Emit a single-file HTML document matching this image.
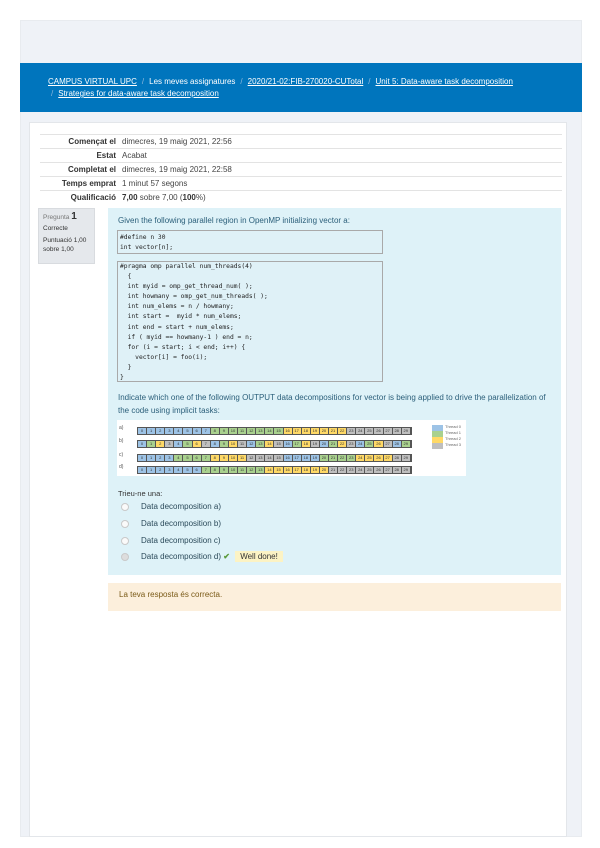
<!DOCTYPE html>
<html><head><meta charset="utf-8"><style>
*{margin:0;padding:0;box-sizing:border-box}
body{width:600px;height:848px;background:#fff;font-family:"Liberation Sans",sans-serif;position:relative;overflow:hidden;color:#333}
.abs{position:absolute}
#band{left:20px;top:20px;width:562px;height:817px;background:#eff2f7;border:1px solid #e8ebef}
#hdr{left:20px;top:63px;width:562px;height:49px;background:#0075bd}
#hdr div{position:absolute;font-size:8px;color:#fff;white-space:nowrap}
#hdr u{color:#fff}
#hdr .s{color:#8fb9dc;margin:0 5px}
#card{left:29px;top:122px;width:538px;height:715px;background:#fff;border:1px solid #e3e6ea}
.row{position:absolute;left:40px;width:522px;height:14px;border-top:1px solid #e3e3e3;font-size:8px;line-height:13px}
.row b{position:absolute;right:446px;font-weight:bold;color:#333}
.row span{position:absolute;left:82px;color:#444}
#info{left:38px;top:208px;width:57px;height:56px;background:#e5e8ec;border:1px solid #d8dbdf;font-size:6.5px;color:#333;padding:3px 4px;line-height:9px}
#q{left:108px;top:208px;width:453px;height:367px;background:#def2f8}
.code{position:absolute;left:117px;width:266px;background:#dff1f7;border:1px solid #a9a9a9;font-family:"DejaVu Sans Mono","Liberation Mono",monospace;font-size:6.3px;color:#222;padding:0 2px;white-space:pre}
.t{position:absolute;font-size:8px;color:#2b5f7a;white-space:nowrap}
.opt{position:absolute;left:121px;font-size:8px;color:#2b4a5a;white-space:nowrap}
.opt i{position:absolute;left:0;top:1px;width:8px;height:8px;border:1px solid #c9c9c9;border-radius:50%;background:#fafafa}
.opt span{position:absolute;left:20px}
#fb{left:108px;top:583px;width:453px;height:28px;background:#fcefdc;font-size:8px;color:#7a5a17;padding:7px 11px}
.strip{position:absolute;left:137px;height:8px;display:flex;border:1px solid #555}
.strip div{width:9.1px;height:6px;border-right:1px solid #555;font-size:4px;line-height:6px;text-align:center;color:#333}
</style></head><body>
<div id="band" class="abs"></div>
<div id="hdr" class="abs">
<div style="left:28px;top:14px"><u>CAMPUS VIRTUAL UPC</u><span class="s">/</span>Les meves assignatures<span class="s">/</span><u>2020/21-02:FIB-270020-CUTotal</u><span class="s">/</span><u>Unit 5: Data-aware task decomposition</u></div>
<div style="left:31px;top:26px"><span class="s" style="margin-left:0">/</span><u>Strategies for data-aware task decomposition</u></div>
</div>
<div id="card" class="abs"></div>
<div class="row" style="top:134px"><b>Començat el</b><span>dimecres, 19 maig 2021, 22:56</span></div>
<div class="row" style="top:148px"><b>Estat</b><span>Acabat</span></div>
<div class="row" style="top:162px"><b>Completat el</b><span>dimecres, 19 maig 2021, 22:58</span></div>
<div class="row" style="top:176px"><b>Temps emprat</b><span>1 minut 57 segons</span></div>
<div class="row" style="top:190px;border-bottom:0"><b>Qualificació</b><span><b style="position:static">7,00</b> sobre 7,00 (<b style="position:static">100</b>%)</span></div>
<div id="info" class="abs"><span style="color:#777">Pregunta</span> <b style="font-size:10px">1</b><br><span style="line-height:14px">Correcte</span><br>Puntuació 1,00 sobre 1,00</div>
<div id="q" class="abs"></div>
<div class="t" style="left:118px;top:216px">Given the following parallel region in OpenMP initializing vector a:</div>
<div class="code" style="top:230px;height:24px;line-height:9.5px;padding-top:2px">#define n 30
int vector[n];</div>
<div class="code" style="top:261px;height:121px;line-height:10.1px;padding-top:0">#pragma omp parallel num_threads(4)
  {
  int myid = omp_get_thread_num( );
  int howmany = omp_get_num_threads( );
  int num_elems = n / howmany;
  int start =  myid * num_elems;
  int end = start + num_elems;
  if ( myid == howmany-1 ) end = n;
  for (i = start; i &lt; end; i++) {
    vector[i] = foo(i);
  }
}</div>
<div class="t" style="left:118px;top:393px">Indicate which one of the following OUTPUT data decompositions for vector is being applied to drive the parallelization of</div>
<div class="t" style="left:118px;top:406px">the code using implicit tasks:</div>
<div class="abs" style="left:117px;top:420px;width:349px;height:56px;background:#fff"></div>
<div id="strips"></div>
<div class="abs" style="left:119px;top:425px;font-size:5px;color:#555">a)</div>
<div class="abs" style="left:119px;top:438px;font-size:5px;color:#555">b)</div>
<div class="abs" style="left:119px;top:452px;font-size:5px;color:#555">c)</div>
<div class="abs" style="left:119px;top:464px;font-size:5px;color:#555">d)</div>
<div class="abs" style="left:432px;top:425px;width:11px;height:6px;background:#9dc3e6"></div>
<div class="abs" style="left:432px;top:431px;width:11px;height:6px;background:#a9d18e"></div>
<div class="abs" style="left:432px;top:437px;width:11px;height:6px;background:#ffd966"></div>
<div class="abs" style="left:432px;top:443px;width:11px;height:6px;background:#bfbfbf"></div>
<div class="abs" style="left:445px;top:424px;font-size:4px;line-height:6px;color:#666">Thread 0<br>Thread 1<br>Thread 2<br>Thread 3</div>
<div class="t" style="left:118px;top:489px;font-size:7.5px;color:#333">Trieu-ne una:</div>
<div class="opt" style="top:502px"><i></i><span>Data decomposition a)</span></div>
<div class="opt" style="top:519px"><i></i><span>Data decomposition b)</span></div>
<div class="opt" style="top:536px"><i></i><span>Data decomposition c)</span></div>
<div class="opt" style="top:552px"><i style="background:#ddd"></i><span>Data decomposition d) <b style="color:#5a9a3a">✔</b> <span style="position:static;background:#fcf3c4;padding:1px 5px;color:#333;margin-left:3px">Well done!</span></span></div>
<div id="fb" class="abs">La teva resposta és correcta.</div>
<script>
var C=['#9dc3e6','#a9d18e','#ffd966','#bfbfbf'];
var rows=[[427,i=>i<8?0:i<16?1:i<23?2:3],[440,i=>i%4],[454,i=>Math.floor(i/4)%4],[466,i=>i<7?0:i<14?1:i<21?2:3]];
var h='';
rows.forEach(r=>{h+='<div class="strip" style="top:'+r[0]+'px">';for(var i=0;i<30;i++)h+='<div style="background:'+C[r[1](i)]+'">'+i+'</div>';h+='</div>';});
document.getElementById('strips').innerHTML=h;
</script>
</body></html>
